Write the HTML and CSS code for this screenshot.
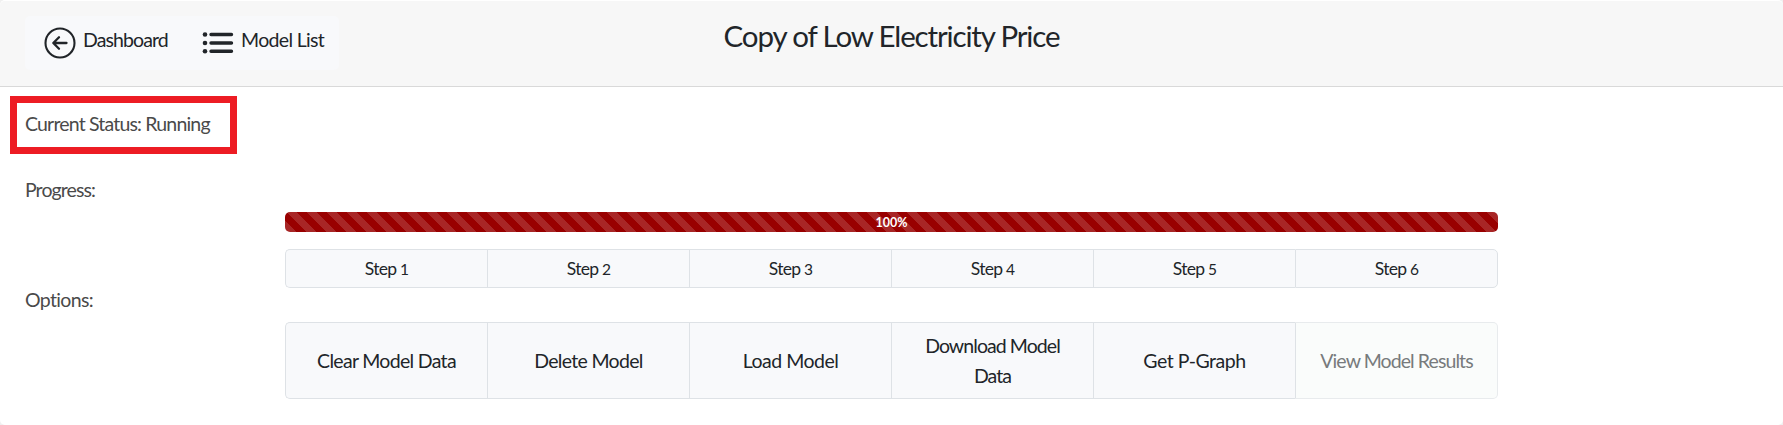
FILE: index.html
```
<!DOCTYPE html>
<html lang="en">
<head>
<meta charset="utf-8">
<title>Copy of Low Electricity Price</title>
<link rel="stylesheet" href="styles.css">
</head>
<body>
<main class="card">
  <header class="card-header">
    <nav class="nav-group">
      <a class="nav-link"><svg class="icon-back" viewBox="0 0 32 32" fill="none" stroke="#212529" stroke-width="2.1" stroke-linecap="round" stroke-linejoin="round"><circle cx="16" cy="16" r="14.5"/><path d="M22.5 16H9.5M15 10.2L9.3 16l5.7 5.8" stroke-width="2.3"/></svg><span class="dashboard">Dashboard</span></a>
      <a class="nav-link"><svg class="icon-list" viewBox="0 0 32 24" fill="#212529" stroke="#212529" stroke-linecap="round"><g stroke="none"><circle cx="3" cy="3.5" r="2.3"/><circle cx="3" cy="12" r="2.3"/><circle cx="3" cy="20.3" r="2.3"/></g><path d="M9 3.5h20.5M9 12h20.5M9 20.3h20.5" stroke-width="3.4"/></svg><span class="model-list">Model List</span></a>
    </nav>
    <h1 class="title">Copy of Low Electricity Price</h1>
  </header>
  <section class="card-body">
    <div class="status">Current Status: Running</div>
    <div class="label label-progress">Progress:</div>
    <div class="progress">100%</div>
    <div class="group steps">
      <div class="cell"><span>Step <span class="num">1</span></span></div>
      <div class="cell"><span>Step <span class="num">2</span></span></div>
      <div class="cell"><span>Step <span class="num">3</span></span></div>
      <div class="cell"><span>Step <span class="num">4</span></span></div>
      <div class="cell"><span>Step <span class="num">5</span></span></div>
      <div class="cell"><span>Step <span class="num">6</span></span></div>
    </div>
    <div class="label label-options">Options:</div>
    <div class="group options">
      <button class="cell">Clear Model Data</button>
      <button class="cell">Delete Model</button>
      <button class="cell load">Load Model</button>
      <button class="cell download">Download Model<br>Data</button>
      <button class="cell graph">Get P-Graph</button>
      <button class="cell disabled" disabled>View Model Results</button>
    </div>
  </section>
</main>
</body>
</html>
```
FILE: styles.css
```
* { box-sizing: border-box; }
body { margin: 0; background: #f0f0f0; color: #212529; font-family: Lato, "Open Sans", sans-serif; font-size: 19.5px; line-height: 30px; }
.card { height: 425px; border-top: 1px solid #fff; border-radius: 5px; background: #fff; overflow: hidden; }
.card-header { display: grid; grid-template-columns: 1fr auto 1fr; height: 86px; padding: 15px 25px; background: #f7f7f7; border-bottom: 1px solid #d9d9d9; }
.nav-group { display: flex; justify-self: start; width: 314px; height: 54px; border-radius: 5px; background: #f8f9fb; }
.nav-link { display: flex; align-items: flex-start; white-space: nowrap; }
.nav-link span { padding-top: 9px; }
.dashboard { width: 85px; letter-spacing: -.9px; }
.model-list { letter-spacing: -.66px; }
.icon-back { width: 32px; height: 32px; margin: 11px 7px 0 19px; }
.icon-list { width: 32px; height: 24px; margin: 15px 7px 0 34px; }
.title { margin: 1px 0 0; font-size: 29.5px; font-weight: 400; line-height: 38px; letter-spacing: -1.15px; white-space: nowrap; }
.card-body { padding: 9px 10px 0; color: #4a4a4a; }
.status { width: 227px; height: 58px; padding: 6px 8px; border: 7px solid #ed1c24; letter-spacing: -.82px; white-space: nowrap; }
.label { padding-left: 15px; }
.label-progress { margin-top: 21px; letter-spacing: -.9px; }
.progress { width: 1213px; height: 20px; margin: 7px 0 17px 275px; border-radius: 5px; background: linear-gradient(45deg, rgba(255,255,255,.15) 25%, transparent 25%, transparent 50%, rgba(255,255,255,.15) 50%, rgba(255,255,255,.15) 75%, transparent 75%) 2px 0 / 20px 20px #900; color: #fff; font-size: 12.5px; font-weight: 700; line-height: 21px; text-align: center; }
.group { display: grid; grid-template-columns: repeat(5, 202px) 203px; width: 1213px; margin-left: 275px; color: #212529; }
.cell { display: flex; align-items: center; justify-content: center; padding: 0; border: 1px solid #dee2e6; border-right-width: 0; background: #f8f9fb; color: inherit; font: inherit; letter-spacing: -.68px; text-align: center; white-space: nowrap; }
.cell:first-child { border-radius: 5px 0 0 5px; }
.cell:last-child { border-right-width: 1px; border-radius: 0 5px 5px 0; }
.steps { height: 39px; font-size: 17.5px; }
.steps .cell { letter-spacing: -.75px; }
.num { font-size: 15.5px; }
.label-options { margin-top: -3px; letter-spacing: -.65px; }
.options { height: 77px; margin-top: 7px; }
.options .load { letter-spacing: -.5px; }
.options .download { display: block; letter-spacing: -.93px; }
.options .graph { letter-spacing: -.45px; }
.options .disabled { border-color: #e8ebed; border-left-color: #dee2e6; background: #fafcfb; color: #777a7c; letter-spacing: -.92px; }
```
